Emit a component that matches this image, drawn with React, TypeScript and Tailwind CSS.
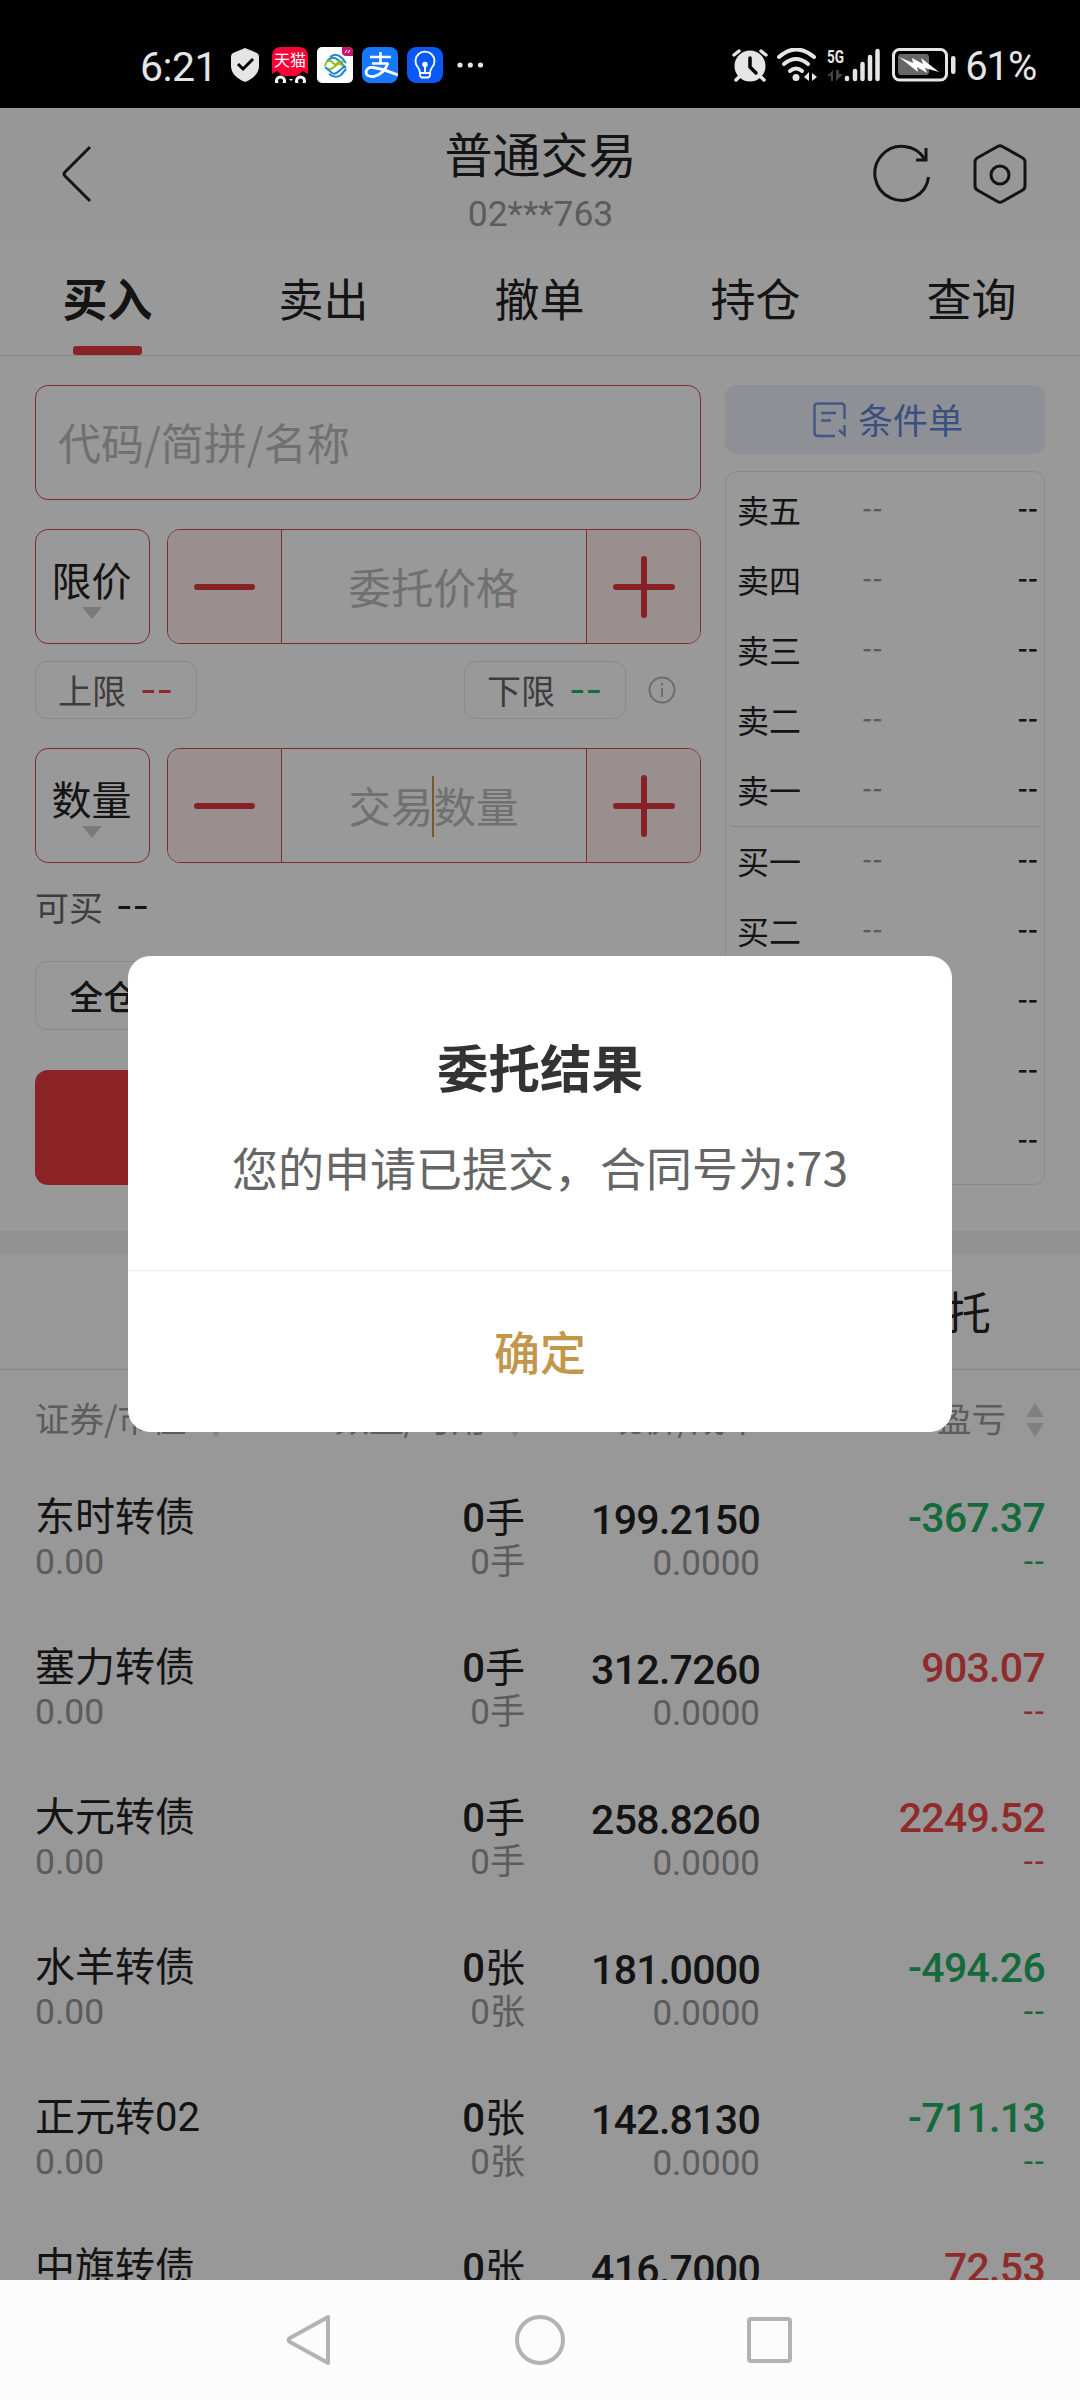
import type { ReactNode } from "react";
import clsx from "clsx";

type Holding = {
  name: string;
  unit: "手" | "张";
  price: string;
  pnl: string;
};

const TABS = ["买入", "卖出", "撤单", "持仓", "查询"];
const SELL_LEVELS = ["卖五", "卖四", "卖三", "卖二", "卖一"];
const BUY_LEVELS = ["买一", "买二", "买三", "买四", "买五"];
const POSITIONS = ["全仓", "1/2", "1/3", "1/4"];

const HOLDINGS: Holding[] = [
  { name: "东时转债", unit: "手", price: "199.2150", pnl: "-367.37" },
  { name: "塞力转债", unit: "手", price: "312.7260", pnl: "903.07" },
  { name: "大元转债", unit: "手", price: "258.8260", pnl: "2249.52" },
  { name: "水羊转债", unit: "张", price: "181.0000", pnl: "-494.26" },
  { name: "正元转02", unit: "张", price: "142.8130", pnl: "-711.13" },
  { name: "中旗转债", unit: "张", price: "416.7000", pnl: "72.53" },
];

function StatusBar() {
  return (
    <div className="flex h-[108px] shrink-0 items-center bg-black pt-[22px] pr-[44px] pl-[140px] font-['Roboto','Noto_Sans_CJK_SC',sans-serif] text-[#e5e5e5]">
      <span className="w-[91px] pt-[4px] text-[41px] leading-none tracking-[-0.5px]">6:21</span>
      <svg className="h-[34px] w-[28px]" viewBox="0 0 28 34">
        <path d="M14 0 L26 5 Q28 6 28 9 V18 Q28 28 14 34 Q0 28 0 18 V9 Q0 6 2 5Z" fill="#e5e5e5" />
        <path d="M7 16 L12 21 L22 11" fill="none" stroke="#000" strokeWidth="3" />
      </svg>

      {/* 通知图标 */}
      <div className="ml-[13px] flex gap-[9px]">
        <div className="relative h-9 w-9 overflow-hidden rounded-t-lg">
          <div className="h-[27px] rounded-t-lg bg-[#ff0036] pt-[5px] text-center text-[16px] leading-[18px] whitespace-nowrap text-white">
            天猫
          </div>
          <svg className="absolute bottom-0 left-0 h-[14px] w-9" viewBox="0 0 36 14">
            <path d="M0 5 L5 2 L9 5 H27 L31 2 L36 5 V14 H0Z" fill="#000" />
            <path d="M7 5 H29 L24 7 H12Z" fill="#ff0036" />
            <ellipse cx="8.5" cy="12" rx="4" ry="4" fill="none" stroke="#fff" strokeWidth="3" />
            <ellipse cx="28.5" cy="12" rx="4" ry="4" fill="none" stroke="#fff" strokeWidth="3" />
            <path d="M17 10 h4 l-2 2z" fill="#fff" />
          </svg>
        </div>
        <svg className="h-9 w-9" viewBox="0 0 36 36">
          <rect width="36" height="36" rx="5" fill="#fff" />
          <path d="M25 0 H31 Q36 0 36 5 V9 H29 Q25 9 25 5Z" fill="#c8146e" />
          <path d="M28 6 l2 -3 M31 6 l2 -3" stroke="#fff" />
          <g fill="none" strokeWidth="2">
            <path d="M13 10 Q19 5 25 11 L29 16" stroke="#1c86c8" />
            <path d="M10 14 Q16 8 21 13 L29 21" stroke="#1c86c8" />
            <path d="M8 19 Q9 13 14 14 L18 18 L22 15 Q25 13 26 16" stroke="#8dc21f" />
            <path d="M10 22 Q14 23 17 20 L21 17 Q24 16 27 20" stroke="#8dc21f" />
            <path d="M8 20 L15 26 Q18 28 22 24 L28 19" stroke="#1c86c8" />
            <path d="M12 27 Q18 32 24 28 L29 22" stroke="#1c86c8" />
          </g>
        </svg>
        {/* 支付宝 */}
        <svg className="h-9 w-9" viewBox="0 0 36 36" fill="none" stroke="#fff">
          <rect width="36" height="36" rx="8" fill="#1677ff" stroke="none" />
          <path d="M8 10 H29 M18.500 5 V16 M10 16.500 H26" strokeWidth="2.500" />
          <path d="M26 16 Q22 27 12 29.500 Q4 30 4 25 Q5 20 11 20.500 Q18 21 36 28" strokeWidth="2.800" />
        </svg>
        <svg className="h-9 w-9" viewBox="0 0 36 36" fill="none" stroke="#fff" strokeWidth="1.8">
          <rect width="36" height="36" rx="9" fill="#0a59f7" stroke="none" />
          <path d="M13 26 Q13 23 11 20.5 A9.5 9.5 0 1 1 25 20.5 Q23 23 23 26Z" />
          <path d="M14 30.500 H22 M13 26 V28 Q13 30.500 16 30.500 H20 Q23 30.500 23 28 V26 M18 18 V26" />
          <circle cx="18" cy="17.500" r="1.800" fill="#fff" />
        </svg>
      </div>
      <svg className="ml-[13px] h-[6px] w-[28px]" viewBox="0 0 28 6" fill="#e5e5e5">
        <circle cx="4" cy="3" r="2.600" />
        <circle cx="14.300" cy="3" r="2.600" />
        <circle cx="24.500" cy="3" r="2.600" />
      </svg>

      <div className="ml-auto flex items-center">
        <svg className="h-[34px] w-[36px]" viewBox="0 0 36 34">
          <g stroke="#e5e5e5" strokeWidth="3.500" strokeLinecap="round">
            <path d="M2 7 L7 3 M29 3 L34 7 M7 29 L4 32 M29 29 L32 32" />
          </g>
          <circle cx="18" cy="18" r="15.500" fill="#e5e5e5" />
          <path d="M18 10 V19 L24 25" fill="none" stroke="#000" strokeWidth="3.500" strokeLinecap="round" />
        </svg>
        <svg className="ml-[9px] h-[34px] w-[42px]" viewBox="0 0 42 34" fill="none" stroke="#e5e5e5" strokeLinecap="round">
          <path d="M2 9 Q19 -6 37 9" strokeWidth="4" />
          <path d="M7 16 Q19 6 31 16" strokeWidth="4" />
          <path d="M13 23 Q19 18 25 23" strokeWidth="4" />
          <circle cx="19" cy="29.500" r="3.500" fill="#e5e5e5" stroke="none" />
          <path d="M32 24 V33 L27 29Z M35 33 V25 L40 29Z" fill="#e5e5e5" stroke="none" />
        </svg>
        <svg className="ml-[8px] h-[34px] w-[54px]" viewBox="0 0 54 34">
          <text x="0" y="15" fontSize="19" fontWeight="700" textLength="17" lengthAdjust="spacingAndGlyphs" fill="#e5e5e5">
            5G
          </text>
          <path d="M6 22 V33 H4 V28 H0 L6 22 M9 22 V33 L16 26 H12 V22Z" fill="#444" />
          <g stroke="#e5e5e5" strokeWidth="4.500" strokeLinecap="round">
            <path d="M20 30 V31 M28 23 V31 M35.500 16 V31 M43 9 V31 M50.500 3 V31" />
          </g>
        </svg>
        <svg className="ml-[11px] h-[34px] w-[64px]" viewBox="0 0 64 34">
          <rect x="1.500" y="1.500" width="53" height="30.500" rx="6" fill="none" stroke="#e5e5e5" strokeWidth="3" />
          <rect x="6" y="6" width="31" height="21" rx="3" fill="#666" />
          <path d="M7 9 L21 15 L20 10 L31 16 L29 10 L47 24 L33 20 L35 25 L25 19 L26 24Z" fill="#fff" />
          <rect x="59" y="8" width="4.500" height="18" rx="2.200" fill="#e5e5e5" />
        </svg>
        <span className="ml-[9px] pt-[4px] text-[40px] leading-none tracking-[-1.2px]">61%</span>
      </div>
    </div>
  );
}

function Header() {
  return (
    <div className="flex h-[132px] shrink-0 items-center bg-[#fcfcfc] pr-[53px] pl-[61px]">
      <svg className="h-[58px] w-[32px]" viewBox="0 0 32 58" fill="none" stroke="#222" strokeWidth="3">
        <path d="M29 2 L4 27 Q2 29 4 31 L29 56" />
      </svg>
      <div className="ml-[115px] flex flex-1 flex-col items-center self-start pt-4">
        <h1 className="text-[48px] leading-[56px] text-[#222]">普通交易</h1>
        <span className="mt-[8px] font-['Roboto'] text-[35.500px] leading-[52px] text-[#999]">02***763</span>
      </div>
      <div className="flex gap-[42px]">
        <svg className="h-[60px] w-[58px]" viewBox="0 0 58 60" fill="none" stroke="#222" strokeWidth="3">
          <path d="M55.600 33 A27 27 0 1 1 52 15.500" />
          <path d="M53 4 V16 H43" />
        </svg>
        <svg className="h-[60px] w-[54px]" viewBox="0 0 54 60" fill="none" stroke="#222" strokeWidth="3">
          <path d="M24.500 2.500 Q27 1 29.500 2.500 L49 13.500 Q52 15 52 18 V42 Q52 45 49 46.500 L29.500 57.500 Q27 59 24.500 57.500 L5 46.500 Q2 45 2 42 V18 Q2 15 5 13.500Z" />
          <circle cx="27" cy="31" r="9" />
        </svg>
      </div>
    </div>
  );
}

function TradeTabs() {
  return (
    <div className="grid h-[116px] shrink-0 grid-cols-5 border-b border-[#e2e2e2] bg-white">
      {TABS.map((tab, i) => (
        <button
          key={tab}
          className={clsx("flex flex-col items-center justify-between pt-[26px] pr-px text-[45px] leading-[64px] text-[#222]", i === 0 && "font-bold")}
        >
          {tab}
          {i === 0 && <span className="h-[9px] w-[69px] rounded-[3px] bg-[#e83a3f]" />}
        </button>
      ))}
    </div>
  );
}

function TypeSelect({ label }: { label: string }) {
  return (
    <button className="flex h-[115px] w-[115px] flex-col items-center rounded-[13px] border border-[#d2484b] pt-[22px] pr-[2px]">
      <span className="text-[40px] leading-[55px] text-[#222]">{label}</span>
      <svg className="h-3 w-5" viewBox="0 0 20 12">
        <path d="M0 0 H20 L10 12Z" fill="#ccc" />
      </svg>
    </button>
  );
}

function Stepper({ placeholder, focused }: { placeholder: string; focused?: boolean }) {
  return (
    <div className="flex h-[115px] flex-1 overflow-hidden rounded-[13px] border border-[#d2484b]">
      <div className="flex w-[114px] items-center justify-center border-r border-[#d2484b] bg-[#ffefed]">
        <span className="h-[6px] w-[61px] rounded-full bg-[#e0393e]" />
      </div>
      <div className="relative flex flex-1 items-center justify-center pr-px pb-[2px] text-[42.500px] text-[#bbb]">
        {placeholder}
        {focused && <span className="absolute top-[27px] left-[150px] h-[61px] w-[2px] bg-[#c2964b]" />}
      </div>
      <div className="flex w-[114px] items-center justify-center border-l border-[#d2484b] bg-[#ffefed]">
        <svg className="h-[62px] w-[62px]" viewBox="0 0 62 62" stroke="#e0393e" strokeWidth="6" strokeLinecap="round">
          <path d="M3 31 H59 M31 3 V59" />
        </svg>
      </div>
    </div>
  );
}

function LimitChip({ label, tone }: { label: string; tone: string }) {
  return (
    <div className="flex h-[58px] w-[162px] items-center rounded-xl border border-[#e6e6e6] pb-px pl-[22px] text-[34px] text-[#666]">
      {label}
      <span className={clsx("ml-[14px] font-['Inter'] text-[36px]", tone)}>--</span>
    </div>
  );
}

function OrderForm() {
  return (
    <div className="w-[666px]">
      <div className="flex h-[115px] items-center rounded-[13px] border border-[#d2484b] pb-[2px] pl-[22px] text-[43px] text-[#bbb]">
        代码/简拼/名称
      </div>
      <div className="mt-[29px] flex gap-[17px]">
        <TypeSelect label="限价" />
        <Stepper placeholder="委托价格" />
      </div>
      <div className="mt-[17px] flex items-center">
        <LimitChip label="上限" tone="text-[#e84545]" />
        <div className="ml-auto">
          <LimitChip label="下限" tone="text-[#23b164]" />
        </div>
        <svg className="mr-[25px] ml-[22px] h-7 w-7" viewBox="0 0 28 28" fill="none" stroke="#b5b5b5" strokeWidth="2">
          <circle cx="14" cy="14" r="12.500" />
          <path d="M14 12 V21 M14 7 V9.500" />
        </svg>
      </div>
      <div className="mt-[29px] flex gap-[17px]">
        <TypeSelect label="数量" />
        <Stepper placeholder="交易数量" focused />
      </div>
      <div className="mt-[18px] mb-[30px] flex h-[50px] items-center text-[34px] text-[#666]">
        可买
        <span className="ml-[13px] font-['Inter'] text-[36px] text-[#222]">--</span>
      </div>
      <div className="grid grid-cols-4 gap-10">
        {POSITIONS.map((p) => (
          <button key={p} className="h-[69px] rounded-xl border border-[#e6e6e6] text-[34px] font-medium text-[#222]">
            {p}
          </button>
        ))}
      </div>
      <button className="mt-10 h-[115px] w-full rounded-[13px] bg-[#e8393f] text-[45px] text-white">买入</button>
    </div>
  );
}

function QuoteRow({ label }: { label: string }) {
  return (
    <div className="flex h-[70px] items-center pr-[6px] pb-[5px] pl-[11px] text-[32px] text-[#222]">
      <span className="w-[125px]">{label}</span>
      <span className="pt-[2px] font-['Inter'] text-[22px] font-semibold text-[#999]">--</span>
      <span className="ml-auto pt-[2px] font-['Inter'] text-[22px] font-bold">--</span>
    </div>
  );
}

function QuotePanel() {
  return (
    <div className="flex w-[320px] flex-col">
      <button className="flex h-[69px] items-center justify-center gap-[12px] rounded-xl bg-[#edf0fa] pl-[6px] text-[35px] text-[#5f86d6]">
        <svg className="h-[36px] w-[33px]" viewBox="0 0 33 36" fill="none" stroke="#6d92dd" strokeWidth="2.500">
          <path d="M22 34 H5 Q1.500 34 1.500 31 V4.500 Q1.500 1.500 5 1.500 H28 Q31.500 1.500 31.500 5 V17" />
          <path d="M8 11 H23 M8 18.500 H18 M31.500 23 V33 L26 28" />
        </svg>
        条件单
      </button>
      <div className="mt-[17px] h-[714px] rounded-xl border border-[#e6e6e6] pt-1">
        {SELL_LEVELS.map((l) => (
          <QuoteRow key={l} label={l} />
        ))}
        <div className="mx-[5px] border-t border-[#e2e2e2]" />
        {BUY_LEVELS.map((l) => (
          <QuoteRow key={l} label={l} />
        ))}
      </div>
    </div>
  );
}

function SortIcon() {
  return (
    <svg className="mt-[3px] h-[34px] w-[18px]" viewBox="0 0 18 34" fill="#d6d6d6">
      <path d="M0 14 L9 0 L18 14Z M0 20 H18 L9 34Z" />
    </svg>
  );
}

function ColumnHead({ children, sortable }: { children: ReactNode; sortable?: boolean }) {
  return (
    <div className="flex items-center gap-[20px]">
      {children}
      {sortable && <SortIcon />}
    </div>
  );
}

function Holdings() {
  return (
    <>
      <div className="grid h-[116px] shrink-0 grid-cols-3 items-center border-b border-[#e2e2e2] pb-[2px] text-center text-[45.500px] text-[#222]">
        <span className="font-bold">持仓</span>
        <span>当日成交</span>
        <span>当日委托</span>
      </div>
      <div className="flex h-[102px] shrink-0 items-center bg-[#fdfdfd] pr-9 pb-[6px] pl-[35px] text-[34.500px] text-[#999]">
        <div className="w-[240px]">
          <ColumnHead sortable>证券/市值</ColumnHead>
        </div>
        <div className="flex w-[249px] justify-end">
          <ColumnHead sortable>数量/可用</ColumnHead>
        </div>
        <div className="flex w-[236px] justify-end">
          <ColumnHead>现价/成本</ColumnHead>
        </div>
        <div className="flex flex-1 justify-end">
          <ColumnHead sortable>盈亏</ColumnHead>
        </div>
      </div>
      {HOLDINGS.map((h) => (
        <div
          key={h.name}
          className="flex h-[150px] shrink-0 px-[35px] pt-[23px] font-['Roboto','Noto_Sans_CJK_SC',sans-serif] text-[40px] text-[#222]"
        >
          <div className="w-[240px] pt-px">
            <p className="leading-[44px]">{h.name}</p>
            <p className="text-[35.500px] leading-[44px] text-[#999]">0.00</p>
          </div>
          <div className="w-[250px] pt-px text-right">
            <p className="leading-[46px]">
              <span className="font-medium">0</span>
              {h.unit}
            </p>
            <p className="text-[35px] leading-[42px] text-[#999]">0{h.unit}</p>
          </div>
          <div className="w-[235px] pt-px text-right">
            <p className="text-[41px] leading-[48px] font-medium tracking-[-0.7px]">{h.price}</p>
            <p className="text-[35px] leading-[40px] text-[#999]">0.0000</p>
          </div>
          <div className={clsx("flex-1 text-right", h.pnl.startsWith("-") ? "text-[#23b164]" : "text-[#f04848]")}>
            <p className="text-[41px] leading-[46px] font-medium tracking-[-0.7px]">{h.pnl}</p>
            <p className="font-['Inter'] text-[24px] leading-[42px] font-semibold">--</p>
          </div>
        </div>
      ))}
    </>
  );
}

function ResultDialog() {
  return (
    <div className="absolute inset-x-0 top-[108px] bottom-[120px] flex items-center justify-center bg-black/40">
      <div className="flex h-[476px] w-[824px] flex-col rounded-[22px] bg-white text-center">
        <h2 className="mt-[74px] text-[51.500px] leading-[72px] font-bold text-[#333]">委托结果</h2>
        <p className="mt-[31px] text-[46px] leading-[66px] text-[#666]">您的申请已提交，合同号为:73</p>
        <button className="mt-auto h-[162px] border-t border-[#ebebeb] pb-[3px] text-[46px] font-medium text-[#c2964b]">确定</button>
      </div>
    </div>
  );
}

function SystemNav() {
  return (
    <div className="mt-auto flex h-[120px] shrink-0 items-center justify-center bg-[#fcfcfc]">
      <svg className="h-[54px] w-[510px]" viewBox="0 0 510 54" fill="none" stroke="#b3b3b3" strokeWidth="4" strokeLinejoin="round">
        <path d="M43 4 V50 L5 29 Q2 27 5 25Z" />
        <circle cx="255" cy="27" r="23" />
        <rect x="464" y="6" width="41" height="42" rx="2" />
      </svg>
    </div>
  );
}

export default function App() {
  return (
    <div className="relative flex h-[2400px] w-[1080px] flex-col overflow-hidden bg-white font-['Noto_Sans_CJK_SC',sans-serif]">
      <StatusBar />
      <Header />
      <TradeTabs />
      <div className="flex shrink-0 gap-6 px-[35px] pt-[29px] pb-[46px]">
        <OrderForm />
        <QuotePanel />
      </div>
      <div className="h-[23px] shrink-0 bg-[#f4f4f4]" />
      <div className="flex min-h-0 flex-1 flex-col overflow-hidden bg-[#fdfdfd]">
        <Holdings />
      </div>
      <SystemNav />
      <ResultDialog />
    </div>
  );
}
